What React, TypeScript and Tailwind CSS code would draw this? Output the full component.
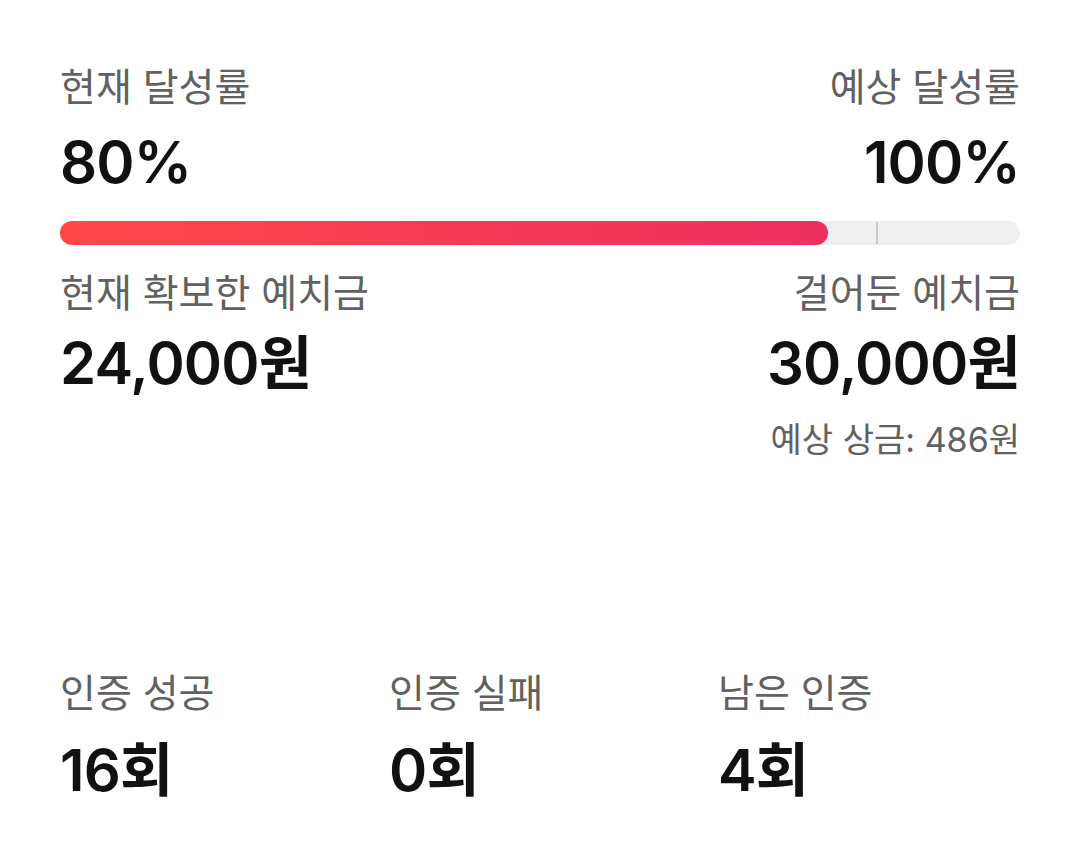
import React from "react";

const font = { fontFamily: "Inter, 'Noto Sans CJK KR', sans-serif" };

function Label({ children, right = false }: { children: React.ReactNode; right?: boolean }) {
  return (
    <div className={`text-[39px] leading-[44px] text-[#616161] ${right ? "text-right" : ""}`}>{children}</div>
  );
}

function Value({ children, right = false }: { children: React.ReactNode; right?: boolean }) {
  return (
    <div
      className={`text-[58px] leading-[64px] font-semibold text-[#111111] tracking-[-0.8px] ${right ? "text-right" : ""}`}
    >
      {children}
    </div>
  );
}

export default function App() {
  return (
    <div style={font} className="w-[1080px] h-[866px] bg-white px-[60px] pt-[65px] antialiased">
      <div className="flex justify-between">
        <div className="flex flex-col gap-[21px]">
          <Label>현재 달성률</Label>
          <Value>80%</Value>
        </div>
        <div className="flex flex-col gap-[21px]">
          <Label right>예상 달성률</Label>
          <Value right>100%</Value>
        </div>
      </div>

      <div className="relative mt-[27px] h-[24px] w-full rounded-full bg-[#efefef]">
        <div className="h-full w-[80%] rounded-full bg-gradient-to-r from-[#ff4747] to-[#ec2f5e]" />
        <div className="absolute left-[85%] top-[1px] bottom-[1px] w-[2px] bg-[#c9c9c9]" />
      </div>

      <div className="mt-[26px] flex justify-between">
        <div className="flex flex-col gap-[16px]">
          <Label>현재 확보한 예치금</Label>
          <Value>24,000원</Value>
        </div>
        <div className="flex flex-col gap-[16px]">
          <Label right>걸어둔 예치금</Label>
          <Value right>30,000원</Value>
          <div className="mt-[9px] text-right text-[34px] leading-[40px] text-[#616161]">예상 상금: 486원</div>
        </div>
      </div>

      <div className="mt-[211px] grid grid-cols-3 gap-x-[27px]">
        {[
          ["인증 성공", "16회"],
          ["인증 실패", "0회"],
          ["남은 인증", "4회"],
        ].map(([l, v]) => (
          <div key={l} className="flex flex-col gap-[23px]">
            <Label>{l}</Label>
            <Value>{v}</Value>
          </div>
        ))}
      </div>
    </div>
  );
}
